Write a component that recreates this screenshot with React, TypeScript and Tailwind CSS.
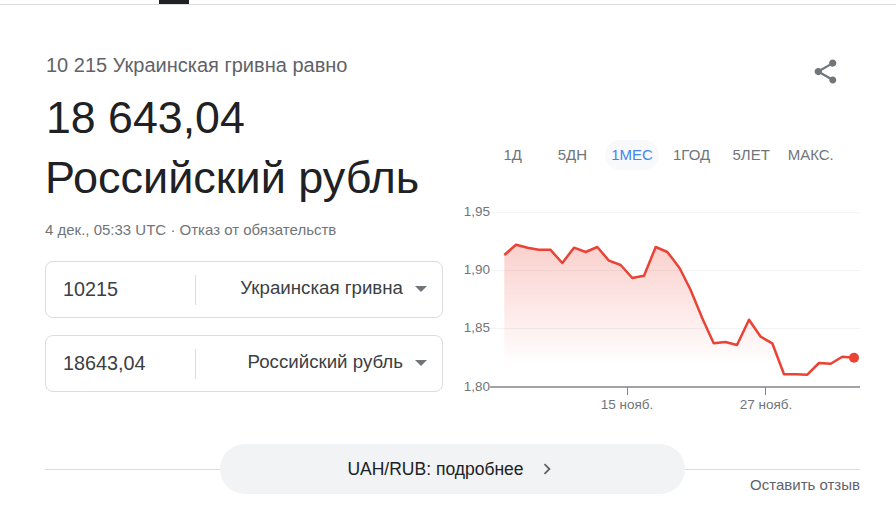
const points: [number, number][] = [
  [504.3, 255], [516, 244.7], [527.7, 247.7], [538.7, 249.7], [550.3, 249.7], [562.3, 263],
  [574, 247.7], [585.7, 252], [597.3, 247], [609, 260.7], [620.7, 265], [632.3, 278],
  [644, 275.7], [655.7, 247], [667.3, 252], [673, 259.3], [679.7, 268.3], [690.3, 289.3],
  [702.3, 318.3], [713.7, 343.3], [725.3, 342], [737, 345], [749, 319.7], [760.7, 336.7],
  [772.3, 343.3], [784, 374.3], [795.7, 374.3], [807.3, 374.7], [819, 363], [830.7, 363.7],
  [842.3, 356.7], [854, 357.7],
];

// svg origin is x=461, y=200 on the page
const OX = 461;
const OY = 200;
const line = points.map(([x, y]) => `${(x - OX).toFixed(1)},${(y - OY).toFixed(1)}`).join(" ");
const area = `${line} ${854 - OX},${387 - OY} ${504.3 - OX},${387 - OY}`;

const ranges = ["1Д", "5ДН", "1МЕС", "1ГОД", "5ЛЕТ", "МАКС."];

const yLabels = [
  { text: "1,95", y: 12 },
  { text: "1,90", y: 70 },
  { text: "1,85", y: 128 },
  { text: "1,80", y: 187 },
];

function Chart() {
  return (
    <svg width="405" height="220" viewBox="0 0 405 220" className="block">
      <defs>
        <linearGradient id="fill" x1="0" y1="0" x2="0" y2="1">
          <stop offset="0" stopColor="#ea4335" stopOpacity="0.25" />
          <stop offset="0.85" stopColor="#ea4335" stopOpacity="0" />
        </linearGradient>
      </defs>
      {[12, 70, 128].map((y) => (
        <line key={y} x1="29" x2="399" y1={y + 0.5} y2={y + 0.5} stroke="#f1f3f4" />
      ))}
      <polygon points={area} fill="url(#fill)" />
      <line x1="29" x2="399" y1="187" y2="187" stroke="#80868b" strokeWidth="1.5" />
      <line x1="166.5" x2="166.5" y1="187" y2="195" stroke="#80868b" />
      <line x1="304.5" x2="304.5" y1="187" y2="195" stroke="#80868b" />
      <polyline points={line} fill="none" stroke="#ea4335" strokeWidth="2.5" strokeLinejoin="round" />
      <circle cx={854 - OX} cy={357.7 - OY} r="5" fill="#ea4335" />
      {yLabels.map((l) => (
        <text key={l.text} x="29" y={l.y + 4} textAnchor="end" fontSize="13.5" fill="#70757a">
          {l.text}
        </text>
      ))}
      <text x="166" y="209" textAnchor="middle" fontSize="13.5" fill="#70757a">15 нояб.</text>
      <text x="305" y="209" textAnchor="middle" fontSize="13.5" fill="#70757a">27 нояб.</text>
    </svg>
  );
}

function ConvertRow({ value, currency }: { value: string; currency: string }) {
  return (
    <div className="flex h-[57px] w-[398px] items-center rounded-lg border border-[#dadce0] bg-white">
      <div className="h-[30px] w-[150px] border-r border-[#dadce0] pl-[17px] text-[19.8px] leading-[28px] text-[#3c4043]">
        {value}
      </div>
      <div className="flex flex-1 items-center justify-end pr-[15px]">
        <span className="pb-[2px] text-[18.7px] text-[#3c4043]">{currency}</span>
        <span className="ml-[12px] h-0 w-0 border-x-[6px] border-t-[6px] border-x-transparent border-t-[#70757a]" />
      </div>
    </div>
  );
}

export default function App() {
  return (
    <div className="h-[506px] w-[896px] overflow-hidden bg-white font-['Liberation_Sans',Arial,sans-serif]">
      <div className="h-[5px] border-b border-[#dadce0] pl-[159px]">
        <div className="h-[4px] w-[30px] bg-[#202124]" />
      </div>

      <div className="flex h-[439px] pl-[45px]">
        <div className="w-[398px] shrink-0">
          <div className="mt-[48px] pl-px text-[20px] leading-[24px] text-[#5f6368]">10 215 Украинская гривна равно</div>
          <div className="mt-[15px] pl-px text-[44.7px] leading-[52px] text-[#202124]">18 643,04</div>
          <div className="mt-[4px] text-[45px] leading-[60px] text-[#202124]">Российский рубль</div>
          <div className="mt-[12px] text-[15px] leading-[20px] text-[#70757a]">
            4 дек., 05:33 UTC <span className="text-[#70757a]">·</span> Отказ от обязательств
          </div>
          <div className="mt-[21px] flex flex-col gap-[17px]">
            <ConvertRow value="10215" currency="Украинская гривна" />
            <ConvertRow value="18643,04" currency="Российский рубль" />
          </div>
        </div>

        <div className="ml-[18px] flex-1">
          <div className="flex justify-end pr-[56px] pt-[52px]">
            <svg width="29" height="29" viewBox="0 0 24 24" fill="#70757a">
              <path d="M18 16.08c-.76 0-1.44.3-1.96.77L8.91 12.7c.05-.23.09-.46.09-.7s-.04-.47-.09-.7l7.05-4.11c.54.5 1.25.81 2.04.81 1.66 0 3-1.34 3-3s-1.34-3-3-3-3 1.34-3 3c0 .24.04.47.09.7L8.04 9.81C7.5 9.31 6.79 9 6 9c-1.66 0-3 1.34-3 3s1.34 3 3 3c.79 0 1.5-.31 2.04-.81l7.12 4.16c-.05.21-.08.43-.08.65 0 1.61 1.31 2.92 2.92 2.92s2.92-1.31 2.92-2.92-1.31-2.92-2.92-2.92z" />
            </svg>
          </div>
          <div className="mt-[54px] flex pl-[22px]">
            {ranges.map((r) => (
              <div key={r} className="flex h-[30px] w-[59.6px] items-center justify-center">
                <span
                  className={
                    r === "1МЕС"
                      ? "flex h-[30px] w-[54px] items-center justify-center rounded-[15px] bg-[#f8f9fa] text-[15px] text-[#4285f4]"
                      : "text-[15px] text-[#70757a]"
                  }
                >
                  {r}
                </span>
              </div>
            ))}
          </div>
          <div className="mt-[30px]">
            <Chart />
          </div>
        </div>
      </div>

      <div className="pl-[45px] pr-[36px]">
        <div className="flex items-center">
          <div className="h-px flex-1 bg-[#dadce0]" />
          <div className="flex h-[50px] w-[465px] items-center justify-center rounded-[25px] bg-[#f1f3f4] text-[17.5px] text-[#202124]">
            UAH/RUB: подробнее
            <svg className="ml-[12px]" width="22" height="22" viewBox="0 0 24 24" fill="#5f6368">
              <path d="M10 6 8.59 7.41 13.17 12l-4.58 4.59L10 18l6-6z" />
            </svg>
          </div>
          <div className="h-px flex-1 bg-[#dadce0]" />
        </div>
        <div className="-mt-[17px] text-right text-[15px] leading-[16px] text-[#5f6368]">Оставить отзыв</div>
      </div>
    </div>
  );
}
